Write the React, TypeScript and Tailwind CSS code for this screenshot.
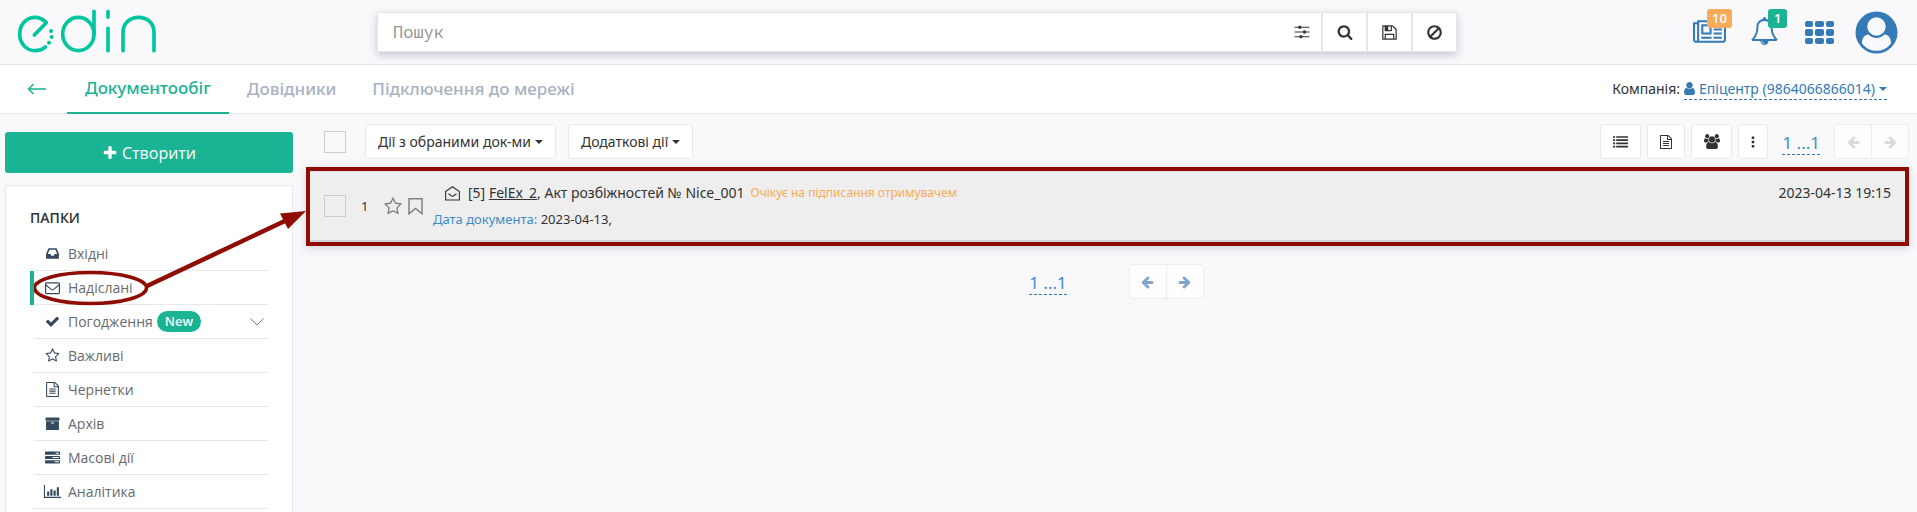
import type { ReactNode } from 'react';

const paths = {
  search:
    'M1216 832q0-185-131.5-316.5t-316.5-131.5-316.5 131.5-131.5 316.5 131.5 316.5 316.5 131.5 316.5-131.5 131.5-316.5zm512 832q0 52-38 90t-90 38q-54 0-90-38l-343-342q-179 124-399 124-143 0-273.5-55.5t-225-150-150-225-55.5-273.5 55.5-273.5 150-225 225-150 273.5-55.5 273.5 55.5 225 150 150 225 55.5 273.5q0 220-124 399l343 343q37 37 37 90z',
  ban: 'M1440 893q0-161-87-295l-754 753q137 89 297 89 111 0 211.5-43.5t173.5-116.5 116-174.5 43-212.5zm-999 299l755-754q-135-91-300-91-148 0-273 73t-198 199-73 274q0 162 89 299zm1223-299q0 157-61 300t-163.5 246-245 164-298.5 61-298.5-61-245-164-163.5-246-61-300 61-299.5 163.5-245.5 245-164 298.5-61 298.5 61 245 164 163.5 245.5 61 299.5z',
  save: 'M512 1536h768v-384h-768v384zm896 0h128v-896q0-14-10-38.5t-20-34.5l-281-281q-10-10-34-20t-39-10v416q0 40-28 68t-68 28h-576q-40 0-68-28t-28-68v-416h-128v1280h128v-416q0-40 28-68t68-28h832q40 0 68 28t28 68v416zm-384-928v-320q0-13-9.5-22.5t-22.5-9.5h-192q-13 0-22.5 9.5t-9.5 22.5v320q0 13 9.5 22.5t22.5 9.5h192q13 0 22.5-9.5t9.5-22.5zm640 32v928q0 40-28 68t-68 28h-1344q-40 0-68-28t-28-68v-1344q0-40 28-68t68-28h928q40 0 88 20t76 48l280 280q28 28 48 76t20 88z',
  sliders:
    'M64 300h440v-110h300v110h924v110h-924v110h-300v-110h-440zM64 840h960v-110h300v110h404v110h-404v110h-300v-110h-960zM64 1380h560v-110h300v110h804v110h-804v110h-300v-110h-560z',
  newspaper:
    'M1024 512h-384v384h384v-384zm128 640v128h-640v-128h640zm0-768v640h-640v-640h640zm640 768v128h-512v-128h512zm0-256v128h-512v-128h512zm0-256v128h-512v-128h512zm0-256v128h-512v-128h512zm-1536 960v-960h-128v960q0 26 19 45t45 19 45-19 19-45zm1664 0v-1088h-1536v1088q0 33-11 64h1483q26 0 45-19t19-45zm128-1216v1216q0 80-56 136t-136 56h-1664q-80 0-136-56t-56-136v-1088h256v-128h1792z',
  bell: 'M912 1696q0-16-16-16-59 0-101.5-42.5t-42.5-101.5q0-16-16-16t-16 16q0 73 51.5 124.5t124.5 51.5q16 0 16-16zm-666-288h1300q-266-300-266-832 0-51-24-105t-69-103-121.5-80.5-169.5-31.5-169.5 31.5-121.5 80.5-69 103-24 105q0 532-266 832zm1482 0q0 52-38 90t-90 38h-448q0 106-75 181t-181 75-181-75-75-181h-448q-52 0-90-38t-38-90q50-42 91-88t85-119.5 74.5-158.5 50-206 19.5-260q0-152 117-282.5t307-158.5q-8-19-8-39 0-40 28-68t68-28 68 28 28 68q0 20-8 39 190 28 307 158.5t117 282.5q0 139 19.5 260t50 206 74.5 158.5 85 119.5 91 88z',
  user: 'M1536 1399q0 109-62.5 187t-150.5 78h-854q-88 0-150.5-78t-62.5-187q0-85 8.5-160.5t31.5-152 58.5-131 94-89 134.5-34.5q131 128 313 128t313-128q76 0 134.5 34.5t94 89 58.5 131 31.5 152 8.5 160.5zm-256-887q0 159-112.5 271.5t-271.5 112.5-271.5-112.5-112.5-271.5 112.5-271.5 271.5-112.5 271.5 112.5 112.5 271.5z',
  users:
    'M529 896q-162 5-265 128h-134q-82 0-138-40.5t-56-118.5q0-353 124-353 6 0 43.5 21t97.5 42.5 119 21.5q67 0 133-23-5 37-5 66 0 139 81 256zm1071 637q0 120-73 189.5t-194 69.5h-874q-121 0-194-69.5t-73-189.5q0-53 3.5-103.5t14-109 26.5-108.5 43-97.5 62-81 85.5-53.5 111.5-20q10 0 43 21.5t73 48 107 48 135 21.5 135-21.5 107-48 73-48 43-21.5q61 0 111.5 20t85.5 53.5 62 81 43 97.5 26.5 108.5 14 109 3.5 103.5zm-1024-1277q0 106-75 181t-181 75-181-75-75-181 75-181 181-75 181 75 75 181zm704 384q0 159-112.5 271.5t-271.5 112.5-271.5-112.5-112.5-271.5 112.5-271.5 271.5-112.5 271.5 112.5 112.5 271.5zm576 225q0 78-56 118.5t-138 40.5h-134q-103-123-265-128 81-117 81-256 0-29-5-66 66 23 133 23 59 0 119-21.5t97.5-42.5 43.5-21q124 0 124 353zm-128-609q0 106-75 181t-181 75-181-75-75-181 75-181 181-75 181 75 75 181z',
  file: 'M1596 380q28 28 48 76t20 88v1152q0 40-28 68t-68 28h-1344q-40 0-68-28t-28-68v-1600q0-40 28-68t68-28h896q40 0 88 20t76 48zm-444-244v376h376q-10-29-22-41l-313-313q-12-12-41-22zm384 1528v-1024h-416q-40 0-68-28t-28-68v-416h-768v1536h1280zm-1024-864q0-14 9-23t23-9h704q14 0 23 9t9 23v64q0 14-9 23t-23 9h-704q-14 0-23-9t-9-23v-64zm736 224q14 0 23 9t9 23v64q0 14-9 23t-23 9h-704q-14 0-23-9t-9-23v-64q0-14 9-23t23-9h704zm0 256q14 0 23 9t9 23v64q0 14-9 23t-23 9h-704q-14 0-23-9t-9-23v-64q0-14 9-23t23-9h704z',
  inbox:
    'M1151 960h316q-1-3-2.5-8.5t-2.5-7.5l-212-496h-708l-212 496q-1 3-2.5 8.5t-2.5 7.5h316l95 192h320zm513 30v482q0 26-19 45t-45 19h-1408q-26 0-45-19t-19-45v-482q0-62 25-123l238-552q10-25 36.5-42t52.5-17h832q26 0 52.5 17t36.5 42l238 552q25 61 25 123z',
  check:
    'M1671 566q0 40-28 68l-724 724-136 136q-28 28-68 28t-68-28l-136-136-362-362q-28-28-28-68t28-68l136-136q28-28 68-28t68 28l294 295 656-657q28-28 68-28t68 28l136 136q28 28 28 68z',
  star: 'M1201 1004l306-297-422-62-189-382-189 382-422 62 306 297-73 421 378-199 377 199zm527-357q0 22-26 48l-363 354 86 500q1 7 1 20 0 50-41 50-19 0-40-12l-449-236-449 236q-22 12-40 12-21 0-31.5-14.5t-10.5-35.5q0-6 2-20l86-500-364-354q-25-27-25-48 0-37 56-46l502-73 225-455q19-41 49-41t49 41l225 455 502 73q56 9 56 46z',
  archive:
    'M128 192h1536q64 0 64 64v256q0 64-64 64h-1536q-64 0-64-64v-256q0-64 64-64zM128 640h1536v960q0 64-64 64h-1408q-64 0-64-64zM768 768q-64 0-64 64t64 64h256q64 0 64-64t-64-64z',
  server:
    'M64 192h1664q64 0 64 64v256q0 64-64 64h-1664q-64 0-64-64v-256q0-64 64-64zM1280 330v108h384v-108zM64 704h1664q64 0 64 64v256q0 64-64 64h-1664q-64 0-64-64v-256q0-64 64-64zM896 842v108h768v-108zM64 1216h1664q64 0 64 64v256q0 64-64 64h-1664q-64 0-64-64v-256q0-64 64-64zM1152 1354v108h512v-108z',
  chart: 'M-128 128h128v1408h1920v128h-2048zM256 896h256v512h-256zM640 640h256v768h-256zM1024 768h256v640h-256zM1408 384h256v1024h-256z',
  list: 'M0 256h256v192h-256zM384 256h1408v192h-1408zM0 640h256v192h-256zM384 640h1408v192h-1408zM0 1024h256v192h-256zM384 1024h1408v192h-1408zM0 1408h256v192h-256zM384 1408h1408v192h-1408z',
  dots: 'M736 192h320v320h-320zM736 736h320v320h-320zM736 1280h320v320h-320z',
  plus: 'M1600 736v192q0 40-28 68t-68 28h-416v416q0 40-28 68t-68 28h-192q-40 0-68-28t-28-68v-416h-416q-40 0-68-28t-28-68v-192q0-40 28-68t68-28h416v-416q0-40 28-68t68-28h192q40 0 68 28t28 68v416h416q40 0 68 28t28 68z',
  left: 'M1536 896v128q0 53-32.5 90.5t-84.5 37.5h-704l293 294q38 36 38 90t-38 90l-75 76q-37 37-90 37-52 0-91-37l-651-652q-37-37-37-90 0-52 37-91l651-650q38-38 91-38 52 0 90 38l75 74q38 38 38 91t-38 91l-293 293h704q52 0 84.5 37.5t32.5 90.5z',
};

function Icon({ name, className, box = '0 0 1792 1792' }: { name: keyof typeof paths; className: string; box?: string }) {
  return (
    <svg viewBox={box} className={className} fill="currentColor" fillRule="evenodd" overflow="visible" aria-hidden="true">
      <path d={paths[name]} />
    </svg>
  );
}

function Logo() {
  return (
    <svg viewBox="48 28 423 135" className="h-[45px] w-[141px]" fill="none" stroke="#00c6a0" strokeWidth="11" strokeLinecap="round" aria-hidden="true">
      <path d="M103 106 139 69C129 58 117 53 105 53C78 53 59 76 59 104C59 131 79 153 105 153C117 153 128 149 136 142" strokeLinejoin="round" />
      <ellipse cx="235" cy="103" rx="47" ry="50" />
      <path d="M282 35V103M324 36V53M324 86V153M369 153V99C369 70 390 53 416 53C442 53 462 70 462 99V153" />
      <g fill="#00c6a0" stroke="none">
        <circle cx="153" cy="94" r="6" />
        <circle cx="155" cy="112" r="6" />
        <circle cx="147" cy="129" r="6" />
      </g>
    </svg>
  );
}

function Envelope() {
  return (
    <svg viewBox="0 0 15 14" className="h-3.5 w-[15px]" fill="none" stroke="currentColor" aria-hidden="true">
      <rect x="0.6" y="1.8" width="13.8" height="10.8" rx="1" strokeWidth="1.2" />
      <path d="M1 4 6.3 8.4Q7.5 9.3 8.7 8.4L14 4" strokeWidth="1.1" />
    </svg>
  );
}

function Caret() {
  return (
    <svg viewBox="0 0 8 4" className="h-1 w-2 shrink-0" fill="currentColor" aria-hidden="true">
      <path d="M0 0h8L4 4z" />
    </svg>
  );
}

const menuIcon = 'h-[15px] w-[15px]';

const folders: { label: string; icon: ReactNode; badge?: string; active?: boolean }[] = [
  { label: 'Вхідні', icon: <Icon name="inbox" className={menuIcon} /> },
  { label: 'Надіслані', icon: <Envelope />, active: true },
  { label: 'Погодження', icon: <Icon name="check" className={menuIcon} />, badge: 'New' },
  { label: 'Важливі', icon: <Icon name="star" className={menuIcon} /> },
  { label: 'Чернетки', icon: <Icon name="file" className={menuIcon} /> },
  { label: 'Архів', icon: <Icon name="archive" className={menuIcon} /> },
  { label: 'Масові дії', icon: <Icon name="server" className={menuIcon} /> },
  { label: 'Аналітика', icon: <Icon name="chart" className={menuIcon} /> },
];

function Highlight() {
  return (
    <svg
      viewBox="0 0 280 100"
      className="pointer-events-none absolute bottom-[-2px] left-0 z-10 h-[100px] w-[280px]"
      fill="none"
      stroke="#8f0c02"
      aria-hidden="true"
    >
      <ellipse cx="56.5" cy="81" rx="56" ry="15.5" strokeWidth="3.5" />
      <path d="M113 79 253 13" strokeWidth="4.5" />
      <path d="M272 4 246 6.5 254 22z" fill="#8f0c02" stroke="none" />
    </svg>
  );
}

function Pager({ disabled = false }: { disabled?: boolean }) {
  return (
    <div
      className={
        disabled
          ? 'flex rounded-[3px] border border-[#ececee] bg-[#fdfdfd] text-[#dadada]'
          : 'flex rounded-[3px] border border-[#ececee] bg-[#fdfdfd] text-[#82a3ca]'
      }
    >
      <button type="button" disabled={disabled} aria-label="Назад" className="flex h-[33px] w-9 items-center justify-center">
        <Icon name="left" box="0 0 1600 1792" className="h-3.5 w-[13px]" />
      </button>
      <button type="button" disabled={disabled} aria-label="Вперед" className="flex h-[33px] w-[37px] items-center justify-center border-l border-[#ececee]">
        <Icon name="left" box="0 0 1600 1792" className="h-3.5 w-[13px] -scale-x-100" />
      </button>
    </div>
  );
}

const toolButton = 'flex h-[35px] items-center justify-center rounded-[3px] border border-[#e7eaec] bg-white text-[#333]';
const searchButton = 'flex w-[45px] items-center justify-center border-l-2 border-[#e5e6e7] text-[#333]';
const pageLink = 'border-b border-dashed border-[#337ab7] text-[17px] leading-[22px] text-[#428bca]';
const checkbox = 'h-[22px] w-[22px] shrink-0 appearance-none border border-[#cfcdc6]';
const tab = "flex items-center px-[18px] font-['Noto_Sans',sans-serif] text-[17px] font-medium";

export default function App() {
  return (
    <div className="flex min-h-screen flex-col bg-[#f9f9fb] font-['Open_Sans','Noto_Sans',sans-serif] text-sm text-[#333]">
      <header className="grid h-[65px] grid-cols-[377px_1fr_460px] border-b border-[#e3e6ea]">
        <a href="#" aria-label="edin" className="self-start pt-[9px] pl-4">
          <Logo />
        </a>
        <form className="mt-3 flex h-10 border border-[#e5e6e7] bg-white shadow-[0_3px_8px_rgba(90,90,140,0.32)]">
          <input
            type="text"
            aria-label="Пошук"
            placeholder="Пошук"
            className="min-w-0 flex-1 px-[15px] font-['Noto_Sans_Mono','Liberation_Mono',monospace] text-[17px] outline-none placeholder:text-[#999]"
          />
          <button type="button" aria-label="Фільтр" className="flex w-[39px] items-center justify-center text-[#333]">
            <Icon name="sliders" className="h-4 w-4" />
          </button>
          <button type="button" aria-label="Шукати" className={searchButton}>
            <Icon name="search" className="h-4 w-4" />
          </button>
          <button type="button" aria-label="Зберегти" className={searchButton}>
            <Icon name="save" className="h-[17px] w-[17px]" />
          </button>
          <button type="button" aria-label="Очистити" className={searchButton}>
            <Icon name="ban" className="h-[17px] w-[17px]" />
          </button>
        </form>
        <div className="flex justify-end pt-[11px] pr-[19px] text-[#337ab7]">
          <a href="#news" aria-label="Новини" className="relative mr-6 h-[42px] w-[33px]">
            <Icon name="newspaper" box="0 0 2048 1792" className="mt-[7px] h-[29px] w-[33px]" />
            <span className="absolute -top-0.5 left-3.5 rounded-[3px] bg-[#f8ac59] px-[5px] text-[13px] leading-[19px] font-semibold text-white">10</span>
          </a>
          <a href="#alerts" aria-label="Сповіщення" className="relative mr-[27px] h-[42px] w-7">
            <Icon name="bell" className="mt-1.5 h-7 w-[29px]" />
            <span className="absolute -top-0.5 left-[18px] rounded-[3px] bg-[#1ab394] px-1.5 text-[13px] leading-[19px] font-semibold text-white">1</span>
          </a>
          <button type="button" aria-label="Сервіси" className="mt-2.5 mr-[21px] grid h-[23px] w-[29px] grid-cols-3 gap-0.5 self-start">
            {Array.from({ length: 9 }, (_, i) => (
              <span key={i} className="h-full rounded-xs bg-[#337ab7]" />
            ))}
          </button>
          <button type="button" aria-label="Профіль" className="self-start">
            <svg viewBox="0 0 43 43" className="h-[43px] w-[43px]" aria-hidden="true">
              <circle cx="21.5" cy="21.5" r="21" fill="#337ab7" />
              <path d="M7 32.5C7 27 9.5 23.5 13.5 23.5A11 11 0 0 0 29.5 23.5C33.5 23.5 36 27 36 32.5A18 18 0 0 1 7 32.5z" fill="#f9f9fb" />
              <circle cx="21.5" cy="15.5" r="9.2" fill="#f9f9fb" />
            </svg>
          </button>
        </div>
      </header>

      <nav className="flex h-[49px] border-b border-[#e3e6ea] bg-white">
        <a href="#back" aria-label="Назад" className="flex w-[67px] items-center pl-[27px] text-[#1ab394]">
          <svg viewBox="0 0 20 12" className="h-3 w-5" fill="none" stroke="currentColor" strokeWidth="1.5" aria-hidden="true">
            <path d="M19 6H1.5M6.5 1 1.5 6l5 5" />
          </svg>
        </a>
        <a href="#docs" className={tab + ' -mb-px border-b-2 border-[#1ab394] text-[#1ab394]'}>
          Документообіг
        </a>
        <a href="#guides" className={tab + ' text-[#a7b1c2]'}>
          Довідники
        </a>
        <a href="#net" className={tab + ' text-[#a7b1c2]'}>
          Підключення до мережі
        </a>
        <div className="ml-auto flex items-center gap-1 pr-[30px] font-['Noto_Sans',sans-serif]">
          <span>Компанія:</span>
          <a href="#company" className="flex items-center gap-1 border-b border-dashed border-[#337ab7] text-[#337ab7]">
            <Icon name="user" className="h-[13px] w-[11px]" box="256 128 1280 1536" />
            Епіцентр (9864066866014)
            <Caret />
          </a>
        </div>
      </nav>

      <div className="flex flex-1">
        <aside className="flex w-[293px] shrink-0 flex-col pt-[18px] pl-[5px]">
          <button type="button" className="flex h-[41px] w-full items-center justify-center gap-1 rounded-[3px] bg-[#1ab394] text-base text-white">
            <Icon name="plus" className="h-4 w-4" />
            Створити
          </button>
          <section className="mt-3 flex-1 border border-b-0 border-[#e7e8f4] bg-white pr-6 pl-6">
            <h2 className="pt-[22px] pb-[9px] text-sm leading-5 font-semibold">ПАПКИ</h2>
            <ul>
              {folders.map((f) => (
                <li key={f.label} className={f.active ? 'relative border-l-4 border-[#1ab394]' : 'pl-1'}>
                  <a href="#folder" className="flex h-[34px] items-center border-b border-[#e7e8ea] pl-2.5 text-[#676a6c]">
                    <span className="mr-2 flex w-4 justify-center text-[#34495e]">{f.icon}</span>
                    {f.label}
                    {f.badge && (
                      <>
                        <span className="ml-1 rounded-full bg-[#1ab394] px-2 text-[13px] leading-[21px] font-semibold text-white">{f.badge}</span>
                        <svg viewBox="0 0 14 8" className="mr-1 ml-auto h-2 w-3.5" fill="none" stroke="#777" aria-hidden="true">
                          <path d="M.5.5 7 7 13.5.5" />
                        </svg>
                      </>
                    )}
                  </a>
                  {f.active && <Highlight />}
                </li>
              ))}
            </ul>
          </section>
        </aside>

        <main className="min-w-0 flex-1 pt-2.5 pr-2 pl-[13px] font-['Noto_Sans',sans-serif]">
          <div className="flex items-center pl-[18px]">
            <input type="checkbox" aria-label="Обрати всі" className={checkbox + ' mr-[19px]'} />
            <button type="button" className={toolButton + ' mr-3 gap-1 px-3'}>
              Дії з обраними док-ми
              <Caret />
            </button>
            <button type="button" className={toolButton + ' gap-1 px-3'}>
              Додаткові дії
              <Caret />
            </button>
            <div className="ml-auto flex items-center gap-1.5">
              <button type="button" aria-label="Список" className={toolButton + ' w-[41px]'}>
                <Icon name="list" className="h-[15px] w-[15px]" />
              </button>
              <button type="button" aria-label="Документ" className={toolButton + ' w-[38px]'}>
                <Icon name="file" className="h-3.5 w-3.5" />
              </button>
              <button type="button" aria-label="Користувачі" className={toolButton + ' w-[41px]'}>
                <Icon name="users" box="-64 0 1920 1792" className="h-[15px] w-4" />
              </button>
              <button type="button" aria-label="Ще" className={toolButton + ' w-[30px]'}>
                <Icon name="dots" className="h-3.5 w-3.5" />
              </button>
              <a href="#page" className={pageLink + ' mx-2 mt-1'}>
                1 ...1
              </a>
              <Pager disabled />
            </div>
          </div>

          <article className="mt-2 border-4 border-[#8f0c02] bg-[#eee] shadow-[0_2px_8px_rgba(90,90,140,0.25)]">
            <div className="flex h-[71px] border-t border-b-2 border-t-[#e0e2e4] border-b-[#d0d5da] px-3.5">
              <input type="checkbox" aria-label="Обрати документ" className={checkbox + ' self-center'} />
              <span className="ml-[15px] w-[22px] self-center text-[13px]">1</span>
              <button type="button" aria-label="Важливий" className="self-center text-[#808080]">
                <Icon name="star" className="h-[19px] w-5" />
              </button>
              <button type="button" aria-label="Закладка" className="ml-[5px] self-center text-[#808080]">
                <svg viewBox="0 0 15 17" className="h-[17px] w-[15px]" fill="none" stroke="currentColor" strokeWidth="1.5" aria-hidden="true">
                  <path d="M1 .8h13v15L7.5 10.5 1 15.8z" />
                </svg>
              </button>
              <div className="ml-2.5 flex flex-col pt-[11px]">
                <div className="flex items-center pl-3 leading-5">
                  <svg viewBox="0 0 15 15" className="mr-2 h-[15px] w-[15px]" fill="none" stroke="currentColor" strokeWidth="1.1" aria-hidden="true">
                    <path d="M.6 5.5 7.5.7l6.9 4.8v8.5H.6zM3.5 7.8 7 10.2h1l3.5-2.4" />
                  </svg>
                  <span>
                    [5] <a href="#felex" className="underline">FelEx_2</a>, Акт розбіжностей № Nice_001
                  </span>
                  <span className="ml-1.5 text-xs text-[#f8ac59]">Очікує на підписання отримувачем</span>
                </div>
                <div className="mt-2 text-[13px] leading-4">
                  <span className="text-[#428bca]">Дата документа:</span> 2023-04-13,
                </div>
              </div>
              <time className="ml-auto pt-[11px] leading-5">2023-04-13 19:15</time>
            </div>
          </article>

          <div className="mt-[18px] flex items-center justify-center pl-[18px]">
            <a href="#page" className={pageLink + ' mt-1 mr-[62px]'}>
              1 ...1
            </a>
            <Pager />
          </div>
        </main>
      </div>
    </div>
  );
}
